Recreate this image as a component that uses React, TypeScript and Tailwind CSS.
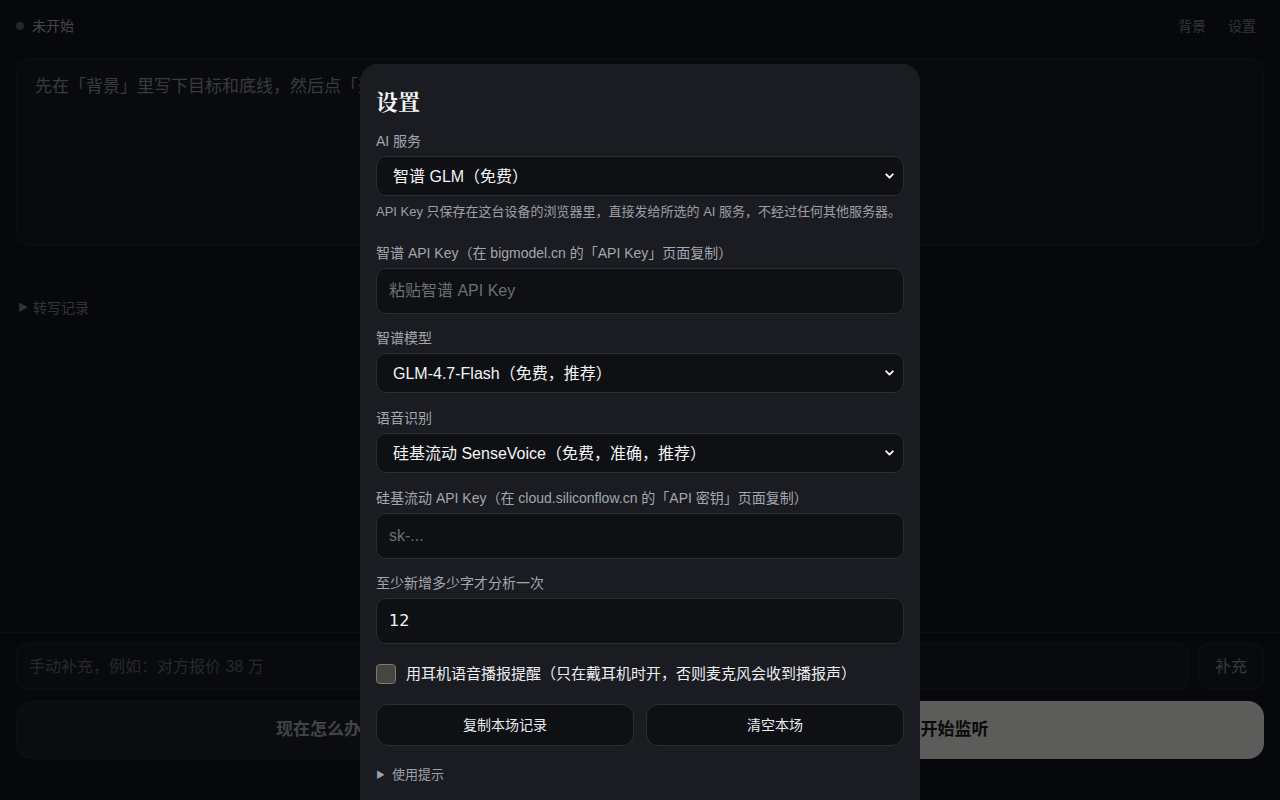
import React from "react";
import { ChevronDown } from "lucide-react";

const sans = "font-['Liberation_Sans','Noto_Sans_CJK_SC',sans-serif]";

function Field({
  label,
  children,
  className = "",
}: {
  label: string;
  children: React.ReactNode;
  className?: string;
}) {
  return (
    <div className={className}>
      <label className="block text-sm leading-5 text-[#a3a7af] mb-[5px]">{label}</label>
      {children}
    </div>
  );
}

function Select({ value }: { value: string }) {
  return (
    <div className="relative">
      <div className="h-10 w-full rounded-[10px] border border-[#2a2d35] bg-[#0e1014] pl-4 pr-8 pt-[2px] flex items-center text-base text-[#f3f4f6]">
        {value}
      </div>
      <ChevronDown
        className="absolute right-[8px] top-1/2 -translate-y-1/2 text-white"
        size={13}
        strokeWidth={3.5}
      />
    </div>
  );
}

function TextInput({ placeholder, value }: { placeholder?: string; value?: string }) {
  return (
    <div
      className={`h-[46px] w-full rounded-[10px] border border-[#2a2d35] bg-[#0e1014] px-3 flex items-center text-base ${
        value ? "text-[#f3f4f6] font-['DejaVu_Sans',sans-serif]" : "text-[#6b6f77]"
      }`}
    >
      {value || placeholder}
    </div>
  );
}

function Settings() {
  return (
    <div className="fixed inset-0 bg-black/60 flex justify-center pt-[64px]">
      <div className={`w-[560px] h-[760px] rounded-t-[18px] bg-[#1a1c22] px-4 pt-[23px] ${sans}`}>
        <h2 className="text-[22px] leading-7 font-bold text-[#f3f4f6] font-['Noto_Serif_CJK_SC','Noto_Serif_CJK',serif]">
          设置
        </h2>

        <Field label="AI 服务" className="mt-[16px]">
          <Select value="智谱 GLM（免费）" />
        </Field>
        <p className="mt-[7px] text-[13px] leading-[18px] text-[#9ca0a8]">
          API Key 只保存在这台设备的浏览器里，直接发给所选的 AI 服务，不经过任何其他服务器。
        </p>

        <Field label="智谱 API Key（在 bigmodel.cn 的「API Key」页面复制）" className="mt-[22px]">
          <TextInput placeholder="粘贴智谱 API Key" />
        </Field>

        <Field label="智谱模型" className="mt-[14px]">
          <Select value="GLM-4.7-Flash（免费，推荐）" />
        </Field>

        <Field label="语音识别" className="mt-[15px]">
          <Select value="硅基流动 SenseVoice（免费，准确，推荐）" />
        </Field>

        <Field label="硅基流动 API Key（在 cloud.siliconflow.cn 的「API 密钥」页面复制）" className="mt-[15px]">
          <TextInput placeholder="sk-..." />
        </Field>

        <Field label="至少新增多少字才分析一次" className="mt-[14px]">
          <TextInput value="12" />
        </Field>

        <div className="mt-[20px] flex items-center gap-[10px]">
          <span className="w-5 h-5 rounded-[4px] border border-[#7a7a78] bg-[#46453f]" />
          <span className="text-[15px] leading-5 text-[#eceef1]">
            用耳机语音播报提醒（只在戴耳机时开，否则麦克风会收到播报声）
          </span>
        </div>

        <div className="mt-[20px] grid grid-cols-2 gap-3">
          <button className="h-[42px] rounded-xl border border-[#2a2d35] bg-[#0e1014] text-sm text-[#e8eaed]">
            复制本场记录
          </button>
          <button className="h-[42px] rounded-xl border border-[#2a2d35] bg-[#0e1014] text-sm text-[#e8eaed]">
            清空本场
          </button>
        </div>

        <div className="mt-[20px] flex items-center gap-[7px] text-[13px] leading-[18px] text-[#9ca0a8]">
          <span className="text-[9px]">▶</span>
          <span>使用提示</span>
        </div>
      </div>
    </div>
  );
}

export default function App() {
  return (
    <div className={`relative h-screen w-full overflow-hidden bg-[#12161d] flex flex-col ${sans}`}>
      <header className="h-[52px] flex items-center justify-between px-4">
        <div className="flex items-center gap-2">
          <span className="w-2 h-2 rounded-full bg-[#5b6069]" />
          <span className="text-sm text-[#a9adb5]">未开始</span>
        </div>
        <div className="flex items-center gap-[22px] pr-2 text-sm text-[#7a7f88]">
          <span>背景</span>
          <span>设置</span>
        </div>
      </header>

      <div className="mx-4 mt-[6px] h-[188px] rounded-2xl border border-[#252a33] bg-[#171b23] px-[18px] pt-[15px]">
        <p className="text-[17px] leading-[26px] text-[#8d929b]">
          先在「背景」里写下目标和底线，然后点「开始监听」。
        </p>
      </div>

      <div className="mt-[52px] ml-[18px] flex items-center gap-[5px] text-sm text-[#7e838c]">
        <span className="text-[10px]">▶</span>
        <span>转写记录</span>
      </div>

      <div className="flex-1" />

      <div className="border-t border-[#1f242c] px-4 pt-[10px] pb-[41px]">
        <div className="flex gap-[9px]">
          <div className="flex-1 h-[47px] rounded-xl border border-[#252a33] bg-[#171b23] px-3 flex items-center text-base text-[#5f646d]">
            手动补充，例如：对方报价 38 万
          </div>
          <button className="w-[66px] h-[47px] rounded-xl border border-[#252a33] bg-[#171b23] text-base text-[#858a93]">
            补充
          </button>
        </div>
        <div className="mt-[11px] grid grid-cols-2 gap-[10px]">
          <button className="h-[58px] rounded-2xl border border-[#252a33] bg-[#1a1e26] pr-[14px] text-[17px] font-bold text-[#a4a8b0]">
            现在怎么办
          </button>
          <button className="h-[58px] rounded-2xl bg-[#e6e6e2] text-[17px] font-bold text-[#1a1c20]">
            开始监听
          </button>
        </div>
      </div>

      <Settings />
    </div>
  );
}
